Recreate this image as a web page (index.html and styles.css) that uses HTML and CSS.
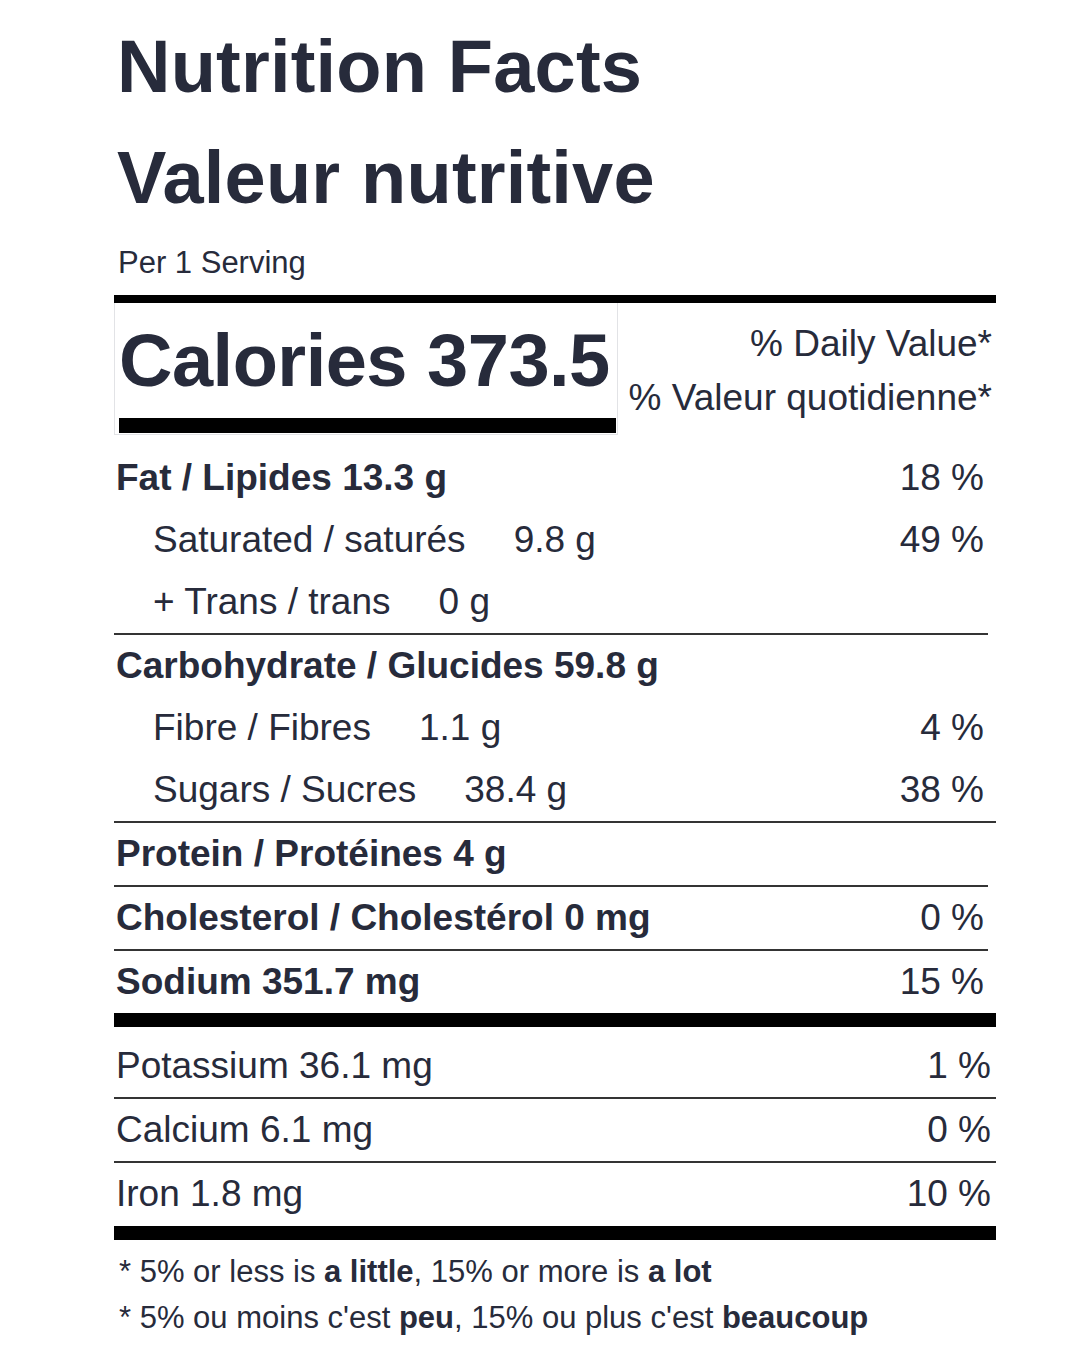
FILE: index.html
```html
<!DOCTYPE html>
<html lang="en">
<head>
<meta charset="utf-8">
<title>Nutrition Facts</title>
<link rel="stylesheet" href="styles.css">
</head>
<body>
<div class="label">
  <h1 class="title">Nutrition Facts<br>Valeur nutritive</h1>
  <div class="serving">Per 1 Serving</div>
  <div class="rule-thick rule-top"></div>

  <div class="cal-row">
    <div class="cal-box">
      <div class="cal-text">Calories 373.5</div>
      <div class="cal-bar"></div>
    </div>
    <div class="dv-head">
      <div>% Daily Value*</div>
      <div>% Valeur quotidienne*</div>
    </div>
  </div>

  <div class="group short bordered first">
    <div class="row main"><span>Fat / Lipides 13.3 g</span><span class="pct">18 %</span></div>
    <div class="row sub"><span>Saturated / saturés<span class="amt">9.8 g</span></span><span class="pct">49 %</span></div>
    <div class="row sub"><span>+ Trans / trans<span class="amt">0 g</span></span><span class="pct"></span></div>
  </div>

  <div class="group bordered">
    <div class="row main short-inner"><span>Carbohydrate / Glucides 59.8 g</span><span class="pct"></span></div>
    <div class="row sub short-inner"><span>Fibre / Fibres<span class="amt">1.1 g</span></span><span class="pct">4 %</span></div>
    <div class="row sub short-inner"><span>Sugars / Sucres<span class="amt">38.4 g</span></span><span class="pct">38 %</span></div>
  </div>

  <div class="group short bordered">
    <div class="row main"><span>Protein / Protéines 4 g</span><span class="pct"></span></div>
  </div>

  <div class="group short bordered">
    <div class="row main"><span>Cholesterol / Cholestérol 0 mg</span><span class="pct">0 %</span></div>
  </div>

  <div class="group short">
    <div class="row main"><span>Sodium 351.7 mg</span><span class="pct">15 %</span></div>
  </div>

  <div class="rule-thick rule-mid"></div>

  <div class="group bordered">
    <div class="row minor"><span>Potassium 36.1 mg</span><span class="pct">1 %</span></div>
  </div>
  <div class="group bordered">
    <div class="row minor"><span>Calcium 6.1 mg</span><span class="pct">0 %</span></div>
  </div>
  <div class="group">
    <div class="row minor"><span>Iron 1.8 mg</span><span class="pct">10 %</span></div>
  </div>

  <div class="rule-thick rule-end"></div>

  <div class="foot">
    <p>* 5% or less is <b>a little</b>, 15% or more is <b>a lot</b></p>
    <p>* 5% ou moins c'est <b>peu</b>, 15% ou plus c'est <b>beaucoup</b></p>
  </div>
</div>
</body>
</html>
```

FILE: styles.css
```css
html, body {
  margin: 0;
  padding: 0;
  background: #ffffff;
}

body {
  font-family: "Liberation Sans", Arial, Helvetica, sans-serif;
  color: #272b3b;
}

.label {
  width: 882px;
  margin-left: 114px;
  padding-top: 11px;
}

.title {
  margin: 0;
  padding-left: 3px;
  font-size: 74px;
  line-height: 111px;
  font-weight: 700;
  letter-spacing: 0.2px;
}

.serving {
  margin-top: 5px;
  font-size: 31px;
  line-height: 50px;
  padding-left: 4px;
}

.rule-thick {
  background: #000000;
}

.rule-top {
  height: 8px;
  margin-top: 7px;
}

.cal-row {
  display: flex;
  align-items: flex-start;
}

.cal-box {
  width: 504px;
  box-sizing: border-box;
  border: 1px solid #e2e3e6;
  border-top: none;
  padding: 8px 1px 1px 4px;
}

.cal-text {
  font-size: 74px;
  line-height: 100px;
  font-weight: 700;
  letter-spacing: -0.5px;
  white-space: nowrap;
}

.cal-bar {
  margin-top: 7px;
  height: 15px;
  background: #000000;
}

.dv-head {
  flex: 1;
  text-align: right;
  padding-top: 14px;
  padding-right: 4px;
  font-size: 37px;
  line-height: 54px;
  white-space: nowrap;
}

.group {
  width: 100%;
}

.group.first {
  margin-top: 12px;
}

.group.bordered {
  border-bottom: 2px solid #343434;
}

.group.short {
  width: 874px;
}

.row {
  display: flex;
  justify-content: space-between;
  font-size: 37px;
  line-height: 62px;
  height: 62px;
  white-space: nowrap;
  padding-right: 4px;
}

.row.short-inner {
  width: 874px;
  box-sizing: border-box;
}

.row.main {
  font-weight: 700;
  padding-left: 2px;
}

.row.sub {
  padding-left: 39px;
}

.row.minor {
  padding-left: 2px;
  padding-right: 5px;
}

.amt {
  margin-left: 48px;
}

.pct {
  font-weight: 400;
}

.rule-mid {
  height: 14px;
  margin-top: 0;
  margin-bottom: 8px;
}

.rule-end {
  height: 14px;
  margin-top: 1px;
}

.foot {
  margin-top: 9px;
  padding-left: 5px;
  font-size: 31px;
  line-height: 46px;
}

.foot p {
  margin: 0;
  white-space: nowrap;
}

.foot b {
  font-weight: 700;
}
```
